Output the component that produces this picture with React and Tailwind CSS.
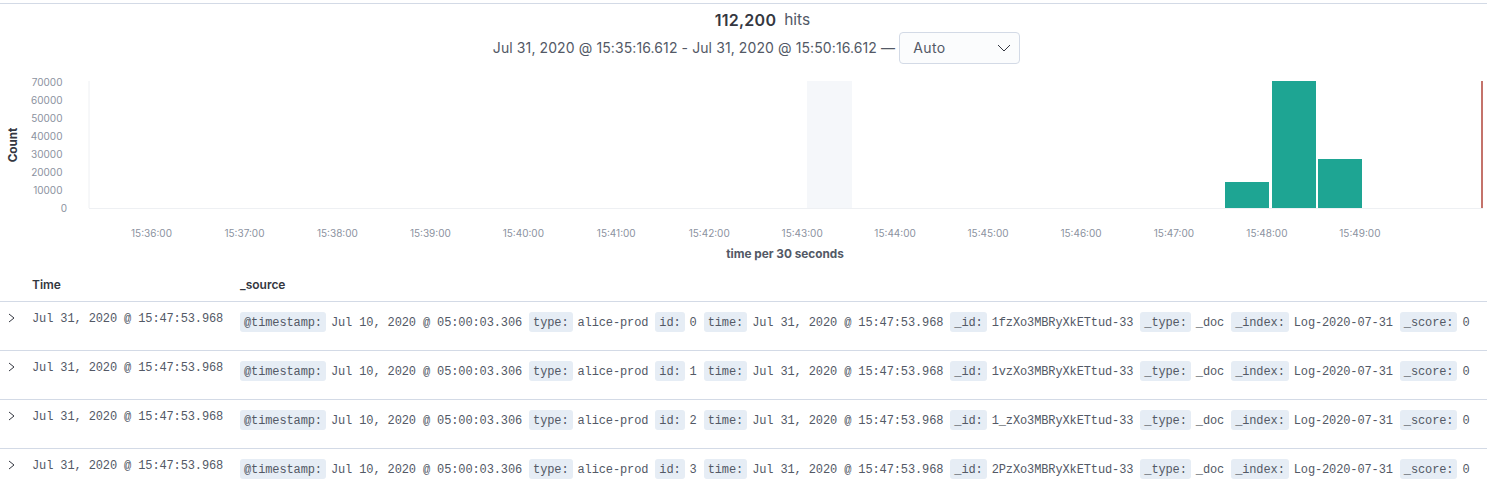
const yTicks = [70000, 60000, 50000, 40000, 30000, 20000, 10000, 0]
const xTicks = ['15:36:00', '15:37:00', '15:38:00', '15:39:00', '15:40:00', '15:41:00', '15:42:00', '15:43:00', '15:44:00', '15:45:00', '15:46:00', '15:47:00', '15:48:00', '15:49:00']
const docIds = ['1fzXo3MBRyXkETtud-33', '1vzXo3MBRyXkETtud-33', '1_zXo3MBRyXkETtud-33', '2PzXo3MBRyXkETtud-33']

function Histogram() {
  return (
    <svg width="1487" height="190" viewBox="0 72 1487 190" className="block" style={{ fontFamily: 'Inter, sans-serif' }}>
      <rect x="807" y="81" width="45" height="127" fill="#f5f7fa" />
      <line x1="89" y1="81" x2="89" y2="208" stroke="#eef0f3" />
      <line x1="89" y1="208.5" x2="1483" y2="208.5" stroke="#eef0f3" />
      <rect x="1225" y="182" width="44" height="26" fill="#1ea593" />
      <rect x="1272" y="81" width="44" height="127" fill="#1ea593" />
      <rect x="1318" y="159" width="44" height="49" fill="#1ea593" />
      <rect x="1481" y="81" width="2" height="127" fill="#c4736b" />
      {yTicks.map((t, i) => (
        <text key={t} x={t === 0 ? 67 : 62.5} y={82 + i * 18} textAnchor="end" dominantBaseline="central" fontSize="10" fill="#8b92a0">{t}</text>
      ))}
      {xTicks.map((t, i) => (
        <text key={t} x={151.5 + i * 92.95} y="233" textAnchor="middle" dominantBaseline="central" fontSize="10" fill="#8b92a0">{t}</text>
      ))}
      <text x="13" y="145" transform="rotate(-90 13 145)" textAnchor="middle" dominantBaseline="central" fontSize="11.7" fontWeight="700" fill="#343741">Count</text>
      <text x="785" y="254" textAnchor="middle" dominantBaseline="central" fontSize="11.8" fontWeight="700" fill="#535966">time per 30 seconds</text>
    </svg>
  )
}

function Field({ name, value }) {
  return (
    <>
      <span className="bg-[#e6edf5] rounded-[3px] h-5 leading-[22px] px-1 mr-[5px] shrink-0 text-[#535966]">{name}:</span>
      <span className="mr-[7px] pt-px shrink-0">{value}</span>
    </>
  )
}

function Row({ id, docId }) {
  return (
    <div className="flex h-[49px] border-b border-[#d3dae6] font-['Liberation_Mono',monospace] text-[12px] tracking-[-0.12px] text-[#535966] whitespace-nowrap overflow-hidden">
      <div className="w-[32px] pl-[8px] pt-[11px] shrink-0">
        <svg width="7" height="10" viewBox="0 0 7 10" fill="none" stroke="#343741" strokeWidth="1" className="block">
          <path d="M1 1l5 4-5 4" />
        </svg>
      </div>
      <div className="w-[208px] pt-[9px] leading-4 shrink-0">Jul 31, 2020 @ 15:47:53.968</div>
      <div className="flex items-center h-5 mt-[10px]">
        <Field name="@timestamp" value="Jul 10, 2020 @ 05:00:03.306" />
        <Field name="type" value="alice-prod" />
        <Field name="id" value={id} />
        <Field name="time" value="Jul 31, 2020 @ 15:47:53.968" />
        <Field name="_id" value={docId} />
        <Field name="_type" value="_doc" />
        <Field name="_index" value="Log-2020-07-31" />
        <Field name="_score" value="0" />
      </div>
    </div>
  )
}

export default function App() {
  return (
    <div className="h-[491px] overflow-hidden bg-white font-['Inter',sans-serif] text-[#343741]">
      <div className="h-[4px] border-b border-[#d3dae6]" />
      <div className="flex justify-center items-center gap-2 h-[28px] pt-[3px] pl-[38px]">
        <span className="text-[16px] tracking-[0.25px] font-semibold">112,200</span>
        <span className="text-[15.5px] text-[#535966]">hits</span>
      </div>
      <div className="flex justify-center items-center h-[32px] pl-[26px] text-[14px] tracking-[0.1px] text-[#535966]">
        <span className="mr-[4px] pb-[2px]">Jul 31, 2020 @ 15:35:16.612 - Jul 31, 2020 @ 15:50:16.612 —</span>
        <div className="flex items-center justify-between w-[121px] h-[32px] pl-[13px] pr-[8px] border border-[#d3dae6] rounded-[4px] bg-[#fbfcfd]">
          <span className="tracking-[0.4px] pb-px">Auto</span>
          <svg width="14" height="8" viewBox="0 0 14 8" fill="none" stroke="#343741" strokeWidth="1">
            <path d="M1 1l6 6 6-6" />
          </svg>
        </div>
      </div>
      <div className="mt-[8px]">
        <Histogram />
      </div>
      <div className="flex h-[40px] border-b border-[#d3dae6] items-center pt-[7px] text-[12px] font-semibold">
        <div className="w-[32px]" />
        <div className="w-[208px]">Time</div>
        <div>_source</div>
      </div>
      {docIds.map((d, i) => (
        <Row key={d} id={i} docId={d} />
      ))}
    </div>
  )
}
